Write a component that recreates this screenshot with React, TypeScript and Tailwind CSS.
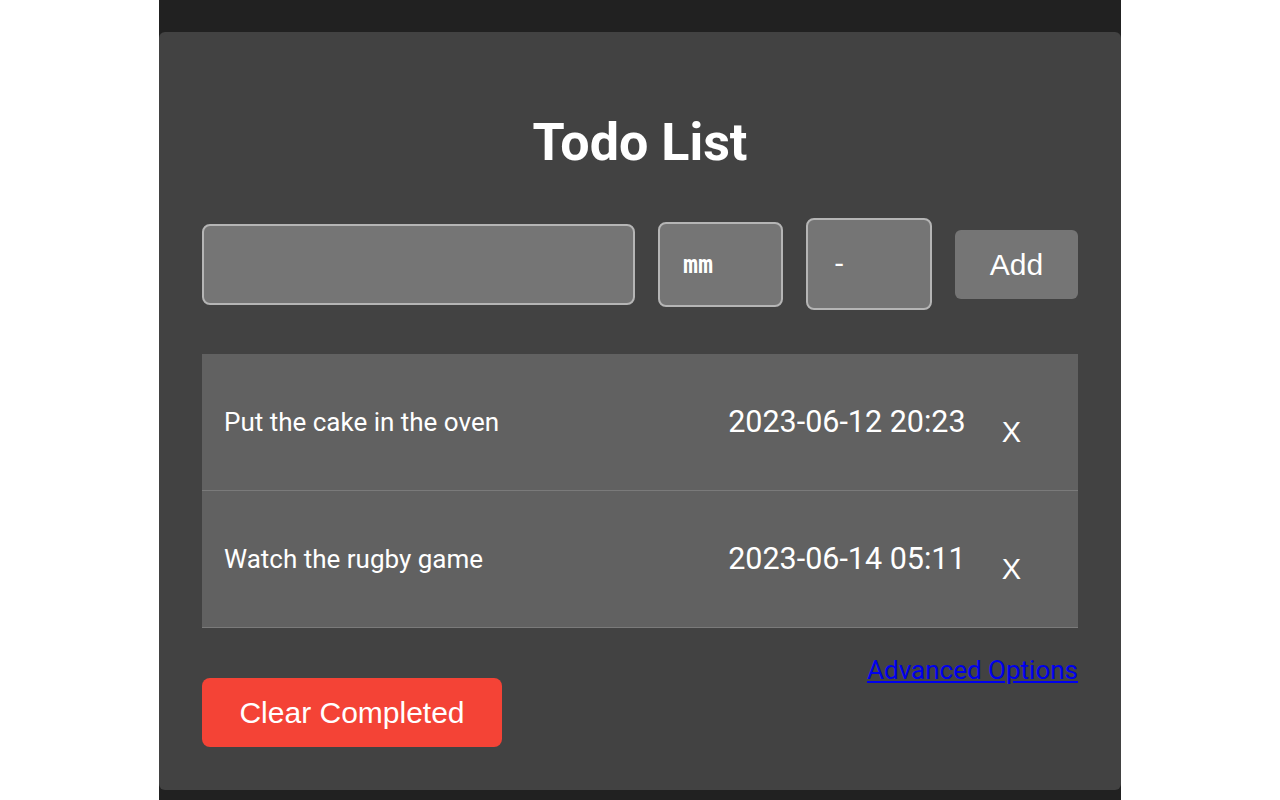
import React, { useState } from "react";

type Todo = {
  id: number;
  text: string;
  due: string;
};

const initialTodos: Todo[] = [
  { id: 1, text: "Put the cake in the oven", due: "2023-06-12 20:23" },
  { id: 2, text: "Watch the rugby game", due: "2023-06-14 05:11" },
];

export default function App() {
  const [todos, setTodos] = useState<Todo[]>(initialTodos);
  const [text, setText] = useState("");

  // Remove a single todo
  const removeTodo = (id: number) => {
    setTodos(todos.filter((t) => t.id !== id));
  };

  return (
    <div className="min-h-[800px] bg-white flex justify-center">
      <div className="w-[962px] bg-[#212121] pt-[32px] pb-[10px]">
        <div className="bg-[#424242] rounded-[6px] px-[43px] pt-[81px] pb-[43px] font-['Roboto',sans-serif] text-white">
          <h1 className="text-center text-[52px] font-bold leading-[60px]">Todo List</h1>

          {/* Input row */}
          <div className="mt-[45px] flex items-center gap-[23px]">
            <input
              value={text}
              onChange={(e) => setText(e.target.value)}
              className="w-[433px] h-[81px] bg-[#757575] border-2 border-[#b5b5b5] rounded-[8px] px-4 text-[26px] text-white outline-none"
            />
            <div className="w-[125px] h-[85px] bg-[#757575] border-2 border-[#b5b5b5] rounded-[8px] flex items-center pl-[23px]">
              <span className="font-['DejaVu_Sans_Mono',monospace] font-bold text-[25px] leading-none">mm</span>
            </div>
            <div className="w-[126px] h-[92px] bg-[#757575] border-2 border-[#b5b5b5] rounded-[8px] flex items-center pl-[27px]">
              <span className="text-[30px] leading-none">-</span>
            </div>
            <button className="w-[123px] h-[69px] bg-[#757575] rounded-[6px] font-['Liberation_Sans',Arial,sans-serif] text-[30px] text-white">
              Add
            </button>
          </div>

          {/* List */}
          <div className="mt-[44px] bg-[#616161]">
            {todos.map((todo) => (
              <div
                key={todo.id}
                className="h-[137px] border-b border-[#7a7a7a] flex items-center pl-[22px]"
              >
                <span className="flex-1 text-[26px]">{todo.text}</span>
                <span className="text-[30.5px]">{todo.due}</span>
                <button
                  onClick={() => removeTodo(todo.id)}
                  className="ml-[36px] mr-[57px] mt-[22px] font-['Liberation_Sans',Arial,sans-serif] text-[29px] text-white"
                >
                  X
                </button>
              </div>
            ))}
          </div>

          {/* Footer */}
          <div className="mt-[24px] flex justify-between items-start">
            <button className="mt-[26px] w-[300px] h-[69px] bg-[#f44336] rounded-[8px] font-['Liberation_Sans',Arial,sans-serif] text-[30px] text-white">
              Clear Completed
            </button>
            <a href="#" className="mt-[3px] text-[26px] text-[#0000ee] underline leading-[30px]">
              Advanced Options
            </a>
          </div>
        </div>
      </div>
    </div>
  );
}
